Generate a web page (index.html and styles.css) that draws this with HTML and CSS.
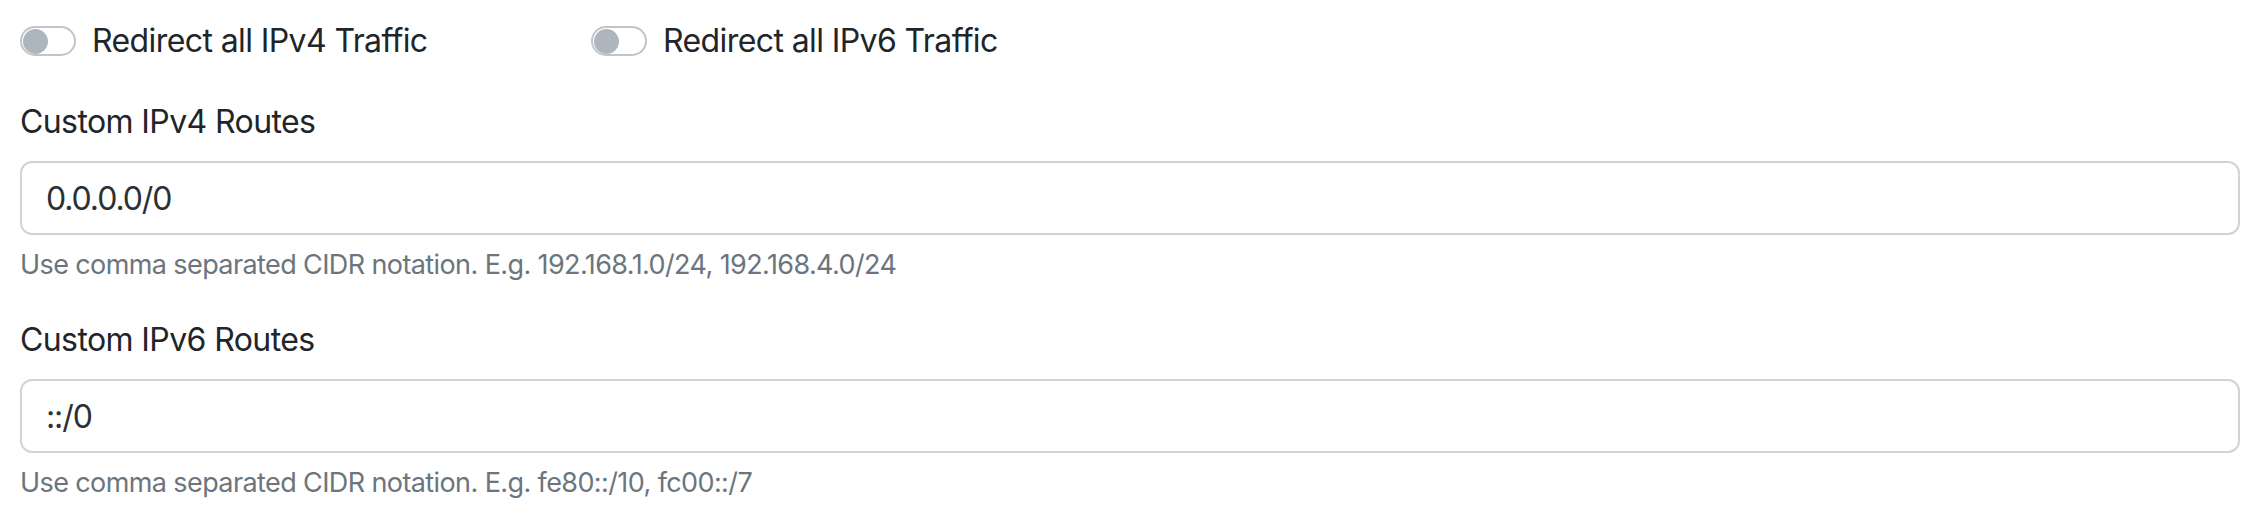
FILE: index.html
```html
<!DOCTYPE html>
<html lang="en">
<head>
<meta charset="utf-8">
<title>Routes</title>
<link rel="stylesheet" href="styles.css">
</head>
<body>
<div class="page">
  <div class="switch-row">
    <label class="switch">
      <span class="track"><span class="knob"></span></span>
      <span class="switch-text">Redirect all IPv4 Traffic</span>
    </label>
    <label class="switch">
      <span class="track"><span class="knob"></span></span>
      <span class="switch-text">Redirect all IPv6 Traffic</span>
    </label>
  </div>
  <div class="field">
    <label class="field-label" for="v4">Custom IPv4 Routes</label>
    <input class="field-input" id="v4" type="text" value="0.0.0.0/0">
    <div class="field-help">Use comma separated CIDR notation. E.g. 192.168.1.0/24, 192.168.4.0/24</div>
  </div>
  <div class="field">
    <label class="field-label" for="v6">Custom IPv6 Routes</label>
    <input class="field-input" id="v6" type="text" value="::/0">
    <div class="field-help">Use comma separated CIDR notation. E.g. fe80::/10, fc00::/7</div>
  </div>
</div>
</body>
</html>
```

FILE: styles.css
```css
html, body {
  margin: 0;
  padding: 0;
  background: #ffffff;
}

body {
  font-family: Inter, "Noto Sans", "Liberation Sans", sans-serif;
  font-size: 32px;
  line-height: 48px;
  letter-spacing: -0.6px;
  color: #212529;
}

.page {
  padding: 17px 26px 0 20px;
}

.switch-row {
  display: grid;
  grid-template-columns: 571px 571px;
  margin-bottom: 33px;
}

.switch {
  display: flex;
  align-items: center;
  gap: 16px;
  height: 48px;
}

.track {
  box-sizing: border-box;
  width: 56px;
  height: 30px;
  border: 2px solid #bfc5cb;
  border-radius: 15px;
  background: #ffffff;
  display: flex;
  align-items: center;
  padding-left: 1px;
}

.knob {
  width: 25px;
  height: 25px;
  border-radius: 50%;
  background: #adb5bd;
}

.switch-text {
  color: #212529;
}

.field {
  display: flex;
  flex-direction: column;
  margin-bottom: 30px;
}

.field-label {
  display: block;
  margin-bottom: 15px;
}

.field-input {
  box-sizing: border-box;
  width: 100%;
  height: 74px;
  margin: 0;
  padding: 0 24px;
  border: 2px solid #ced4da;
  border-radius: 12px;
  font-family: inherit;
  font-size: 32px;
  letter-spacing: -1.1px;
  color: #2b3035;
  background: #ffffff;
  outline: none;
}

.field-help {
  margin-top: 9px;
  font-size: 27px;
  line-height: 42px;
  letter-spacing: -0.6px;
  color: #6c757d;
}
```
